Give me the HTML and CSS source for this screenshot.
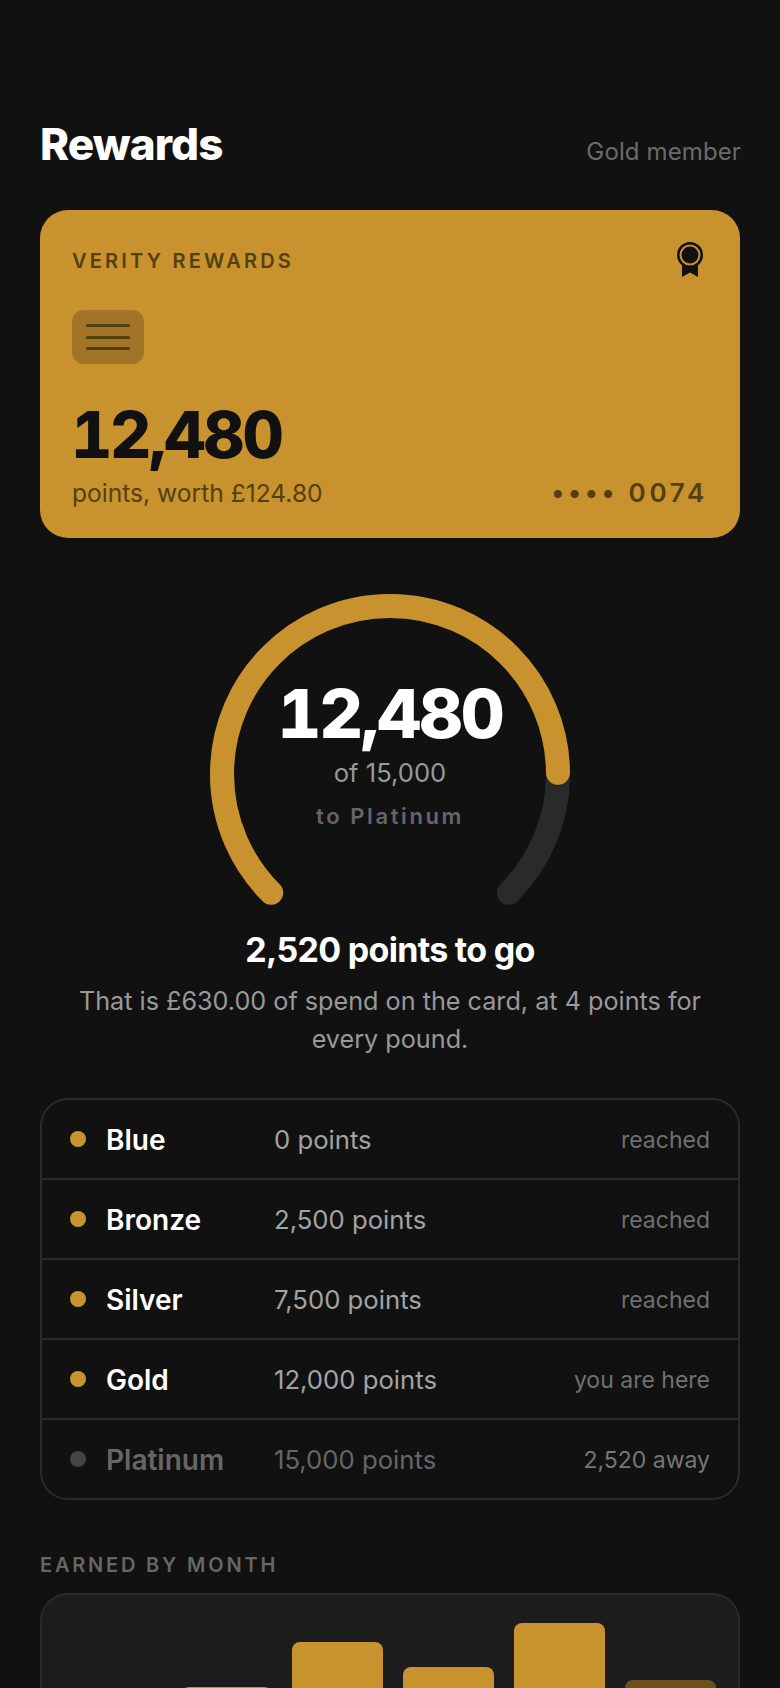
FILE: index.html
```html
<!DOCTYPE html>
<html lang="en">
<head>
    <meta charset="UTF-8">
    <meta name="viewport" content="width=device-width, initial-scale=1.0">
    <title>Rewards</title>
    <link rel="stylesheet" href="styles.css">
</head>
<body>
    <main class="page">
        <header class="header">
            <h1 class="title">Rewards</h1>
            <span class="member">Gold member</span>
        </header>

        <section class="card">
            <div class="card-top">
                <span class="card-brand">VERITY REWARDS</span>
                <svg class="card-badge" viewBox="0 0 26 35" width="26" height="35">
                    <path d="M5 20V35L13 30.5L21 35V20Z" fill="#111"/>
                    <circle cx="13" cy="13" r="11.5" fill="#111" stroke="#111" stroke-width="3"/>
                    <circle cx="13" cy="13" r="9.5" fill="none" stroke="#c8922e" stroke-width="2"/>
                </svg>
            </div>
            <div class="chip">
                <span class="chip-line"></span>
                <span class="chip-line"></span>
                <span class="chip-line"></span>
            </div>
            <div class="card-points">12,480</div>
            <div class="card-bottom">
                <span class="card-worth">points, worth £124.80</span>
                <span class="card-number"><span class="card-dots">••••</span> 0074</span>
            </div>
        </section>

        <section class="gauge">
            <svg class="gauge-ring" viewBox="0 0 360 360" width="360" height="360">
                <path class="gauge-track" pathLength="270" d="M61.2 298.8A168 168 0 1 1 298.8 298.8"/>
                <path class="gauge-fill" pathLength="270" d="M61.2 298.8A168 168 0 1 1 298.8 298.8"/>
            </svg>
            <div class="gauge-text">
                <div class="gauge-value">12,480</div>
                <div class="gauge-of">of 15,000</div>
                <div class="gauge-to">to Platinum</div>
            </div>
        </section>

        <h2 class="togo">2,520 points to go</h2>
        <p class="togo-note">That is £630.00 of spend on the card, at 4 points for every pound.</p>

        <section class="tiers">
            <div class="tier">
                <span class="tier-dot"></span>
                <span class="tier-name">Blue</span>
                <span class="tier-points">0 points</span>
                <span class="tier-state">reached</span>
            </div>
            <div class="tier">
                <span class="tier-dot"></span>
                <span class="tier-name">Bronze</span>
                <span class="tier-points">2,500 points</span>
                <span class="tier-state">reached</span>
            </div>
            <div class="tier">
                <span class="tier-dot"></span>
                <span class="tier-name">Silver</span>
                <span class="tier-points">7,500 points</span>
                <span class="tier-state">reached</span>
            </div>
            <div class="tier">
                <span class="tier-dot"></span>
                <span class="tier-name">Gold</span>
                <span class="tier-points">12,000 points</span>
                <span class="tier-state">you are here</span>
            </div>
            <div class="tier tier-next">
                <span class="tier-dot"></span>
                <span class="tier-name">Platinum</span>
                <span class="tier-points">15,000 points</span>
                <span class="tier-state">2,520 away</span>
            </div>
        </section>

        <h3 class="section-label">EARNED BY MONTH</h3>
        <section class="chart">
            <div class="bar" style="height: 90px"></div>
            <div class="bar" style="height: 116px"></div>
            <div class="bar" style="height: 161px"></div>
            <div class="bar" style="height: 136px"></div>
            <div class="bar" style="height: 180px"></div>
            <div class="bar bar-dim" style="height: 123px"></div>
        </section>
    </main>
</body>
</html>
```

FILE: styles.css
```css
html, body {
    margin: 0;
    background: #111111;
    overflow-x: hidden;
}
body {
    font-family: Inter, "Liberation Sans", sans-serif;
    color: #fff;
}
.page {
    padding: 116px 40px 40px;
}
.header {
    display: flex;
    justify-content: space-between;
    align-items: flex-end;
    height: 58px;
    margin-bottom: 36px;
}
.title {
    margin: 0 0 1px;
    font-size: 44px;
    line-height: 58px;
    font-weight: 800;
    letter-spacing: -0.88px;
}
.member {
    margin-right: -1px;
    font-size: 24px;
    line-height: 44px;
    letter-spacing: 0.12px;
    color: #6b6b6b;
}
.card {
    background: #c8922e;
    border-radius: 28px;
    height: 328px;
    box-sizing: border-box;
    padding: 32px;
}
.card-top {
    display: flex;
    justify-content: space-between;
    align-items: flex-start;
    height: 68px;
}
.card-brand {
    font-size: 20px;
    line-height: 38px;
    font-weight: 600;
    letter-spacing: 3.2px;
    color: #54400f;
}
.card-badge {
    display: block;
    margin: 0 5px 0 0;
}
.chip {
    width: 72px;
    height: 54px;
    border-radius: 12px;
    background: #a17427;
    box-sizing: border-box;
    padding: 14px;
    display: flex;
    flex-direction: column;
    gap: 8.5px;
}
.chip-line {
    height: 3px;
    border-radius: 2px;
    background: #54400f;
}
.card-points {
    margin: 32px 0 0 -1px;
    font-size: 64px;
    line-height: 78px;
    font-weight: 800;
    letter-spacing: -2.2px;
    font-variant-numeric: tabular-nums;
    color: #111;
}
.card-bottom {
    display: flex;
    justify-content: space-between;
    align-items: center;
    height: 37px;
}
.card-worth {
    font-size: 24.6px;
    color: #54400f;
}
.card-number {
    font-size: 26px;
    font-weight: 600;
    letter-spacing: 3.7px;
    color: #54400f;
}
.gauge {
    position: relative;
    width: 360px;
    height: 360px;
    margin: 56px auto 0;
}
.gauge-ring {
    display: block;
}
.gauge-track,
.gauge-fill {
    fill: none;
    stroke-width: 24;
    stroke-linecap: round;
}
.gauge-track {
    stroke: #2a2a2a;
}
.gauge-fill {
    stroke: #c8922e;
    stroke-dasharray: 224.6 270;
}
.gauge-text {
    position: absolute;
    top: 81px;
    left: 0;
    right: 0;
    text-align: center;
}
.gauge-value {
    font-size: 68px;
    line-height: 76px;
    font-weight: 800;
    letter-spacing: -2.1px;
    font-variant-numeric: tabular-nums;
}
.gauge-of {
    margin-top: 5px;
    font-size: 25.6px;
    line-height: 34px;
    color: #999;
}
.gauge-to {
    margin-top: 9px;
    font-size: 22px;
    line-height: 34px;
    font-weight: 600;
    letter-spacing: 2.6px;
    color: #666;
}
.togo {
    margin: -28px 0 0;
    text-align: center;
    font-size: 34px;
    line-height: 48px;
    font-weight: 700;
    letter-spacing: -0.7px;
}
.togo-note {
    margin: 8px 32px 0;
    text-align: center;
    font-size: 25.2px;
    line-height: 38px;
    color: #999;
}
.tiers {
    margin-top: 40px;
    border: 2px solid #2a2a2a;
    border-radius: 28px;
}
.tier {
    display: flex;
    align-items: center;
    height: 78px;
    padding: 0 28px;
    border-bottom: 2px solid #2a2a2a;
}
.tier:last-child {
    border-bottom: none;
}
.tier-dot {
    width: 16px;
    height: 16px;
    border-radius: 50%;
    background: #c8922e;
    margin-right: 20px;
}
.tier-name {
    width: 168px;
    padding-top: 2px;
    font-size: 28px;
    font-weight: 600;
}
.tier-points {
    flex: 1;
    font-size: 25.7px;
    color: #a3a3a3;
}
.tier-state {
    padding-top: 2px;
    font-size: 23px;
    color: #707070;
}
.tier-next .tier-dot {
    background: #444;
}
.tier-next .tier-name {
    color: #666;
}
.tier-next .tier-points {
    color: #666;
}
.tier-next .tier-state {
    color: #777;
}
.section-label {
    margin: 50px 0 0;
    font-size: 20px;
    line-height: 30px;
    font-weight: 600;
    letter-spacing: 2.8px;
    color: #666;
}
.chart {
    margin-top: 13px;
    display: flex;
    align-items: flex-end;
    gap: 20px;
    height: 180px;
    padding: 28px 22px 28px 28px;
    background: #1c1c1c;
    border: 2px solid #2a2a2a;
    border-radius: 28px;
}
.bar {
    flex: 1;
    background: #c8922e;
    border-radius: 8px 8px 0 0;
}
.bar-dim {
    background: #6b4f1f;
}
```
